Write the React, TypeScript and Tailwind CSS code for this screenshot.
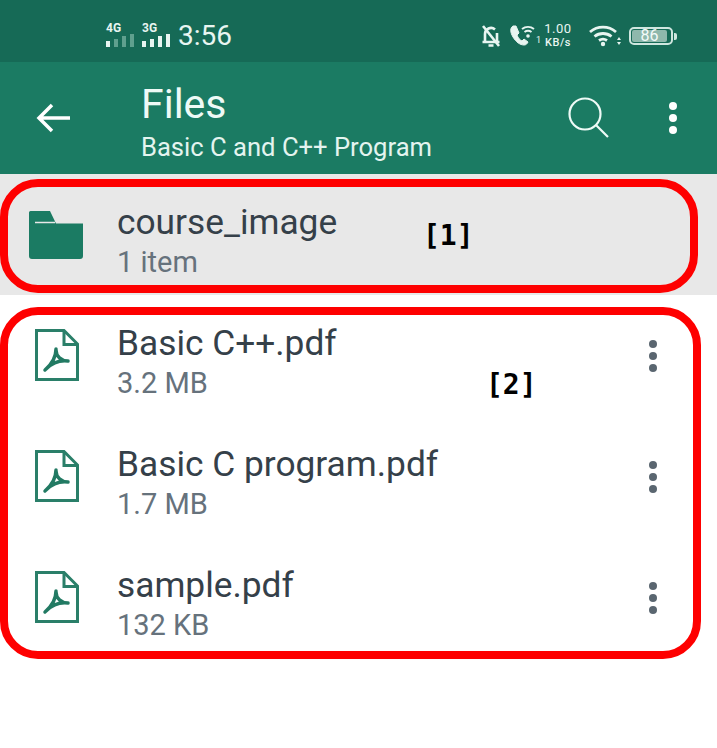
function SignalBars({ dim }: { dim: boolean }) {
  const heights = ['h-[6px]', 'h-[8px]', 'h-[11px]', 'h-[13px]']
  return (
    <div className="flex items-end gap-[4px]">
      {heights.map((h, i) => (
        <span key={i} className={`${h} w-[4px] ${dim && i > 0 ? 'bg-[#5fa08e]' : 'bg-[#e8f5f1]'}`} />
      ))}
    </div>
  )
}

function Signal({ label, dim }: { label: string; dim: boolean }) {
  return (
    <div className="flex w-[30px] flex-col items-start">
      <span className="h-[10px] text-[12px] leading-[10px] font-bold text-[#e8f5f1]">{label}</span>
      <div className="mt-px"><SignalBars dim={dim} /></div>
    </div>
  )
}

function StatusBar() {
  return (
    <div className="flex h-[62px] items-center bg-[#166a56] pt-[10px] pr-[40px] pl-[106px] text-[#e8f5f1]">
      <div className="-mt-[2px] flex">
        <Signal label="4G" dim />
        <div className="ml-[6px]"><Signal label="3G" dim={false} /></div>
      </div>
      <span className="ml-[6px] text-[28px] leading-none">3:56</span>

      <div className="ml-auto flex items-center">
        {/* muted bell */}
        <svg width="22" height="24" viewBox="0 0 22 24" fill="none" stroke="#e8f5f1" strokeWidth="2.600">
          <path d="M5 17V10a6 6 0 0 1 10-4.500M17 9v8M2.500 18h17M8.500 21.500h5" />
          <path d="M3 2l16 20" />
        </svg>
        {/* wifi calling */}
        <svg className="ml-[6px]" width="28" height="26" viewBox="0 0 28 26" fill="none" stroke="#e8f5f1">
          <path d="M5 3c-3 2-3 6 0 11s7 8 11 8c2 0 3-1 4-3l-4-3-2 2c-2-1-4-3-5-6l2-2-3-7z" fill="#e8f5f1" strokeWidth="1" />
          <path d="M14 6a10 10 0 0 1 12 0M16.500 9a6 6 0 0 1 7 0" strokeWidth="2" />
          <circle cx="20" cy="13" r="1.800" fill="#e8f5f1" stroke="none" />
        </svg>
        <span className="mt-[8px] w-[5px] text-[9px] leading-none">1</span>
        <div className="ml-px flex w-[32px] flex-col items-center text-[13px] leading-[14px] tracking-[0.5px]">
          <span>1.00</span>
          <span className="text-[11px] font-medium">KB/s</span>
        </div>
        {/* wifi */}
        <svg className="ml-[15px]" width="32" height="22" viewBox="0 0 32 22" fill="none" stroke="#e8f5f1" strokeWidth="2.800">
          <path d="M1 7a20 20 0 0 1 26 0M5.500 11.500a13.500 13.500 0 0 1 17 0M10 15.500a7 7 0 0 1 8 0" />
          <circle cx="14" cy="19" r="2.200" fill="#e8f5f1" stroke="none" />
          <path d="M30 12l-2 3h4zM30 20l-2-3h4z" fill="#e8f5f1" stroke="none" />
        </svg>
        {/* battery */}
        <div className="ml-[8px] flex items-center">
          <div className="h-[18px] w-[44px] rounded-[5px] border-2 border-[#cfe6df] p-px">
            <div className="flex h-full w-[35px] items-center justify-center rounded-[2px] bg-[#8fb8ac] text-[16px] leading-none text-[#f4fbf9]">
              86
            </div>
          </div>
          <span className="ml-px h-[7px] w-[3px] rounded-r-[2px] bg-[#cfe6df]" />
        </div>
      </div>
    </div>
  )
}

function AppBar() {
  return (
    <div className="flex h-[112px] items-center bg-[#1b7b63] text-white">
      <svg className="ml-[36px]" width="36" height="32" viewBox="0 0 36 32" fill="none" stroke="white" strokeWidth="3.500">
        <path d="M34 16H3M16 3L3 16l13 13" />
      </svg>
      <div className="mt-[6px] ml-[69px] flex flex-col">
        <span className="text-[41px] leading-[46px] text-[#eefaf6]">Files</span>
        <span className="mt-[5px] text-[25.600px] leading-[30px] text-[#e4f4ef]">Basic C and C++ Program</span>
      </div>
      <svg className="mr-[59px] ml-auto" width="42" height="42" viewBox="0 0 42 42" fill="none" stroke="#eefaf6" strokeWidth="2.200">
        <circle cx="17" cy="17" r="15.500" />
        <path d="M28 28l12 12" />
      </svg>
      <div className="mr-[40px] flex flex-col gap-[4px]">
        <span className="size-[8px] rounded-full bg-white" />
        <span className="size-[8px] rounded-full bg-white" />
        <span className="size-[8px] rounded-full bg-white" />
      </div>
    </div>
  )
}

function FolderIcon() {
  return (
    <svg className="ml-[29px]" width="54" height="48" viewBox="0 0 54 48" fill="#1b7b63">
      <path d="M0 1.500A1.500 1.500 0 0 1 1.500 0H21l6 12.500h27V45a3 3 0 0 1-3 3H3a3 3 0 0 1-3-3V1.500z" />
      <path d="M6 11.500h20" stroke="#e8e8e8" strokeWidth="1.500" />
    </svg>
  )
}

function PdfIcon() {
  return (
    <svg className="-mt-[2px] ml-[35px]" width="44" height="52" viewBox="0 0 44 52" fill="none" stroke="#2a7f69">
      <path d="M1.500 1.500H29L42.500 15v35.500h-41z" strokeWidth="3" />
      <path d="M29 2v13.500H42" strokeWidth="3" />
      <path
        d="M21 20C21 27 17 35 10 41M11 40C17 34 25 31 33 32M21 21C21 27 26 32 33 32"
        stroke="#227a63"
        strokeWidth="3.500"
        strokeLinecap="round"
      />
    </svg>
  )
}

function Row({ icon, name, meta, menu, bg }: { icon: React.ReactNode; name: string; meta: string; menu?: boolean; bg?: string }) {
  return (
    <div className={`flex h-[121px] items-center ${bg ?? ''}`}>
      <div className="flex w-[117px] shrink-0 items-center">{icon}</div>
      <div className="mt-[14px] flex flex-col">
        <span className="text-[35.300px] leading-[40px] text-[#354049]">{name}</span>
        <span className="text-[29px] leading-[40px] text-[#66727c]">{meta}</span>
      </div>
      {menu && (
        <div className="mr-[60px] ml-auto flex flex-col gap-[4px]">
          <span className="size-[8px] rounded-full bg-[#5a6670]" />
          <span className="size-[8px] rounded-full bg-[#5a6670]" />
          <span className="size-[8px] rounded-full bg-[#5a6670]" />
        </div>
      )}
    </div>
  )
}

export default function App() {
  return (
    <div className="relative h-[748px] w-[717px] overflow-hidden bg-white font-['Roboto',sans-serif]">
      <StatusBar />
      <AppBar />
      <Row icon={<FolderIcon />} name="course_image" meta="1 item" bg="bg-[#e8e8e8]" />
      <Row icon={<PdfIcon />} name="Basic C++.pdf" meta="3.2 MB" menu />
      <Row icon={<PdfIcon />} name="Basic C program.pdf" meta="1.7 MB" menu />
      <Row icon={<PdfIcon />} name="sample.pdf" meta="132 KB" menu />

      {/* annotation boxes over the list */}
      <div className="absolute top-[179px] left-0 h-[114px] w-[698px] rounded-[38px] border-8 border-[#fe0000]" />
      <div className="absolute top-[307px] left-0 h-[352px] w-[701px] rounded-[38px] border-8 border-[#fe0000]" />
      <span className="absolute top-[221px] left-[423px] font-['DejaVu_Sans_Mono',monospace] text-[28px] leading-[30px] font-bold text-black">[1]</span>
      <span className="absolute top-[370px] left-[486px] font-['DejaVu_Sans_Mono',monospace] text-[28px] leading-[30px] font-bold text-black">[2]</span>
    </div>
  )
}
